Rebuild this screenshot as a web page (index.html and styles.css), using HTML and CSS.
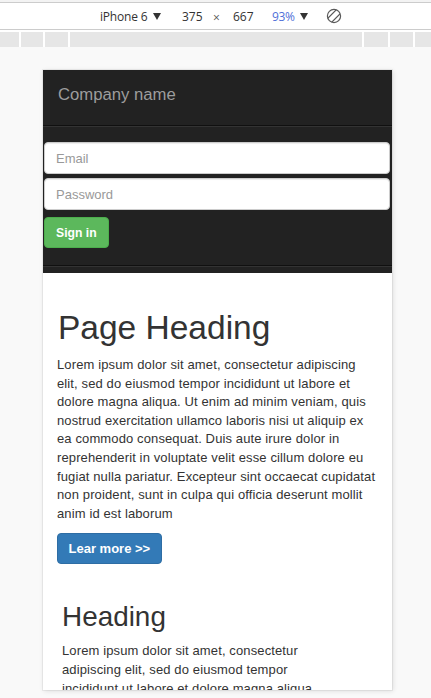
FILE: index.html
```html
<!DOCTYPE html>
<html>
<head>
<meta charset="utf-8">
<link rel="stylesheet" href="styles.css">
</head>
<body>
<div class="topstrip"></div>
<div class="toolbar">
  <span class="tb-device">iPhone 6</span><span class="caret caret-1"></span>
  <span class="tb-w">375</span>
  <span class="tb-x">×</span>
  <span class="tb-h">667</span>
  <span class="tb-zoom">93%</span><span class="caret caret-2"></span>
  <svg class="tb-rotate" width="16" height="16" viewBox="0 0 16 16">
    <defs><clipPath id="cc"><circle cx="8" cy="8" r="6.6"/></clipPath></defs>
    <circle cx="8" cy="8" r="6.6" fill="none" stroke="#5a5a5a" stroke-width="1.2"/>
    <g clip-path="url(#cc)">
      <rect x="5.2" y="-2" width="5.6" height="20" fill="none" stroke="#5a5a5a" stroke-width="1.2" transform="rotate(45 8 8)"/>
    </g>
  </svg>
</div>
<div class="gapstrip"></div>
<div class="ruler">
  <span></span><span></span><span></span><span></span><span></span><span></span><span></span>
</div>

<div class="device">
  <nav class="navbar">
    <div class="brand">Company name</div>
    <form class="navform">
      <input class="field" type="text" placeholder="Email">
      <input class="field" type="password" placeholder="Password">
      <button class="btn btn-green" type="button">Sign in</button>
    </form>
    <div class="navfoot"></div>
  </nav>
  <main class="content">
    <section class="jumbo">
      <h1 class="title">Page Heading</h1>
      <p class="text">Lorem ipsum dolor sit amet, consectetur adipiscing elit, sed do eiusmod tempor incididunt ut labore et dolore magna aliqua. Ut enim ad minim veniam, quis nostrud exercitation ullamco laboris nisi ut aliquip ex ea commodo consequat. Duis aute irure dolor in reprehenderit in voluptate velit esse cillum dolore eu fugiat nulla pariatur. Excepteur sint occaecat cupidatat non proident, sunt in culpa qui officia deserunt mollit anim id est laborum</p>
      <button class="btn btn-blue" type="button">Lear more &gt;&gt;</button>
    </section>
    <section class="col">
      <h2 class="subtitle">Heading</h2>
      <p class="text narrow">Lorem ipsum dolor sit amet, consectetur adipiscing elit, sed do eiusmod tempor incididunt ut labore et dolore magna aliqua. Ut enim ad minim veniam, quis nostrud exercitation ullamco laboris nisi ut aliquip ex ea commodo consequat.</p>
    </section>
  </main>
</div>
</body>
</html>
```

FILE: styles.css
```css
html, body {
  margin: 0;
  padding: 0;
}
body {
  background: #f9f9f9;
  width: 431px;
  height: 698px;
  overflow: hidden;
  font-family: "Liberation Sans", Arial, sans-serif;
}

/* devtools chrome */
.topstrip {
  height: 2px;
  background: #f3f3f3;
}
.toolbar {
  height: 26px;
  background: #ffffff;
  border-top: 1px solid #cccccc;
  border-bottom: 1px solid #cccccc;
  display: flex;
  align-items: center;
  font-family: "Open Sans", "Noto Sans", sans-serif;
  font-size: 12px;
  color: #333;
  padding-left: 100px;
  white-space: nowrap;
}
.tb-device { width: 53px; letter-spacing: -0.2px; }
.caret {
  width: 0;
  height: 0;
  border-left: 4px solid transparent;
  border-right: 4px solid transparent;
  border-top: 7px solid #333;
}
.tb-w { margin-left: 21px; width: 31px; }
.tb-x { width: 20px; color: #555; position: relative; top: 1px; }
.tb-h { width: 39px; }
.tb-zoom { color: #4f6fd8; width: 28px; letter-spacing: -0.3px; }
.tb-rotate { margin-left: 18px; }
.gapstrip {
  height: 2px;
  background: #ffffff;
}
.ruler {
  display: grid;
  grid-template-columns: 19px 22px 23px 1fr 24px 23px 16px;
  column-gap: 2px;
  height: 15px;
  background: #ffffff;
}
.ruler span {
  background: #e6e6e6;
}

/* emulated device */
.device {
  margin: 23px 0 0 43px;
  width: 349px;
  height: 620px;
  overflow: hidden;
  background: #ffffff;
  box-shadow: 0 0 0 1px rgba(0,0,0,0.05), 1px 1px 5px rgba(0,0,0,0.12);
}
.navbar {
  background: #222222;
}
.brand {
  height: 55px;
  box-sizing: border-box;
  padding-left: 15px;
  line-height: 49px;
  font-size: 16.7px;
  color: #9d9d9d;
}
.navform {
  margin: 0;
  border-top: 1px solid #101010;
  box-shadow: inset 0 1px 0 rgba(255,255,255,0.08);
  padding: 16px 2px 17px 1px;
  border-bottom: 1px solid #101010;
  display: flex;
  flex-direction: column;
  align-items: flex-start;
  gap: 4px;
}
.field {
  box-sizing: border-box;
  width: 100%;
  height: 32px;
  margin: 0;
  padding: 0 11px;
  border: 1px solid #cccccc;
  border-radius: 4px;
  background: #fff;
  font-family: "Liberation Sans", Arial, sans-serif;
  font-size: 13px;
  color: #555;
  box-shadow: inset 0 1px 1px rgba(0,0,0,0.075);
}
.field::placeholder {
  color: #999999;
}
.btn {
  box-sizing: border-box;
  height: 31px;
  padding: 0 10.5px;
  border-radius: 4px;
  font-family: "Liberation Sans", Arial, sans-serif;
  font-size: 13px;
  font-weight: bold;
  color: #ffffff;
  cursor: pointer;
}
.btn-green {
  margin-top: 3px;
  padding: 0 11px;
  font-size: 12.2px;
  background: #5cb85c;
  border: 1px solid #4cae4c;
}
.navfoot {
  height: 7px;
  box-shadow: inset 0 1px 0 rgba(255,255,255,0.08);
}

.content {
  color: #333333;
}
.jumbo {
  padding: 37px 14px 0 14px;
}
.title {
  margin: 0 0 9.3px 1px;
  font-size: 33.5px;
  line-height: 36.8px;
  font-weight: normal;
}
.text {
  margin: 0 0 9.3px 0;
  font-size: 13px;
  line-height: 18.6px;
  letter-spacing: 0.12px;
}
.btn-blue {
  display: block;
  background: #337ab7;
  border: 1px solid #2e6da4;
}
.col {
  padding: 38.7px 14px 0 19px;
}
.subtitle {
  margin: 0 0 9.3px 0;
  font-size: 27.9px;
  line-height: 30.7px;
  font-weight: normal;
}
.narrow {
  max-width: 262px;
}
```
